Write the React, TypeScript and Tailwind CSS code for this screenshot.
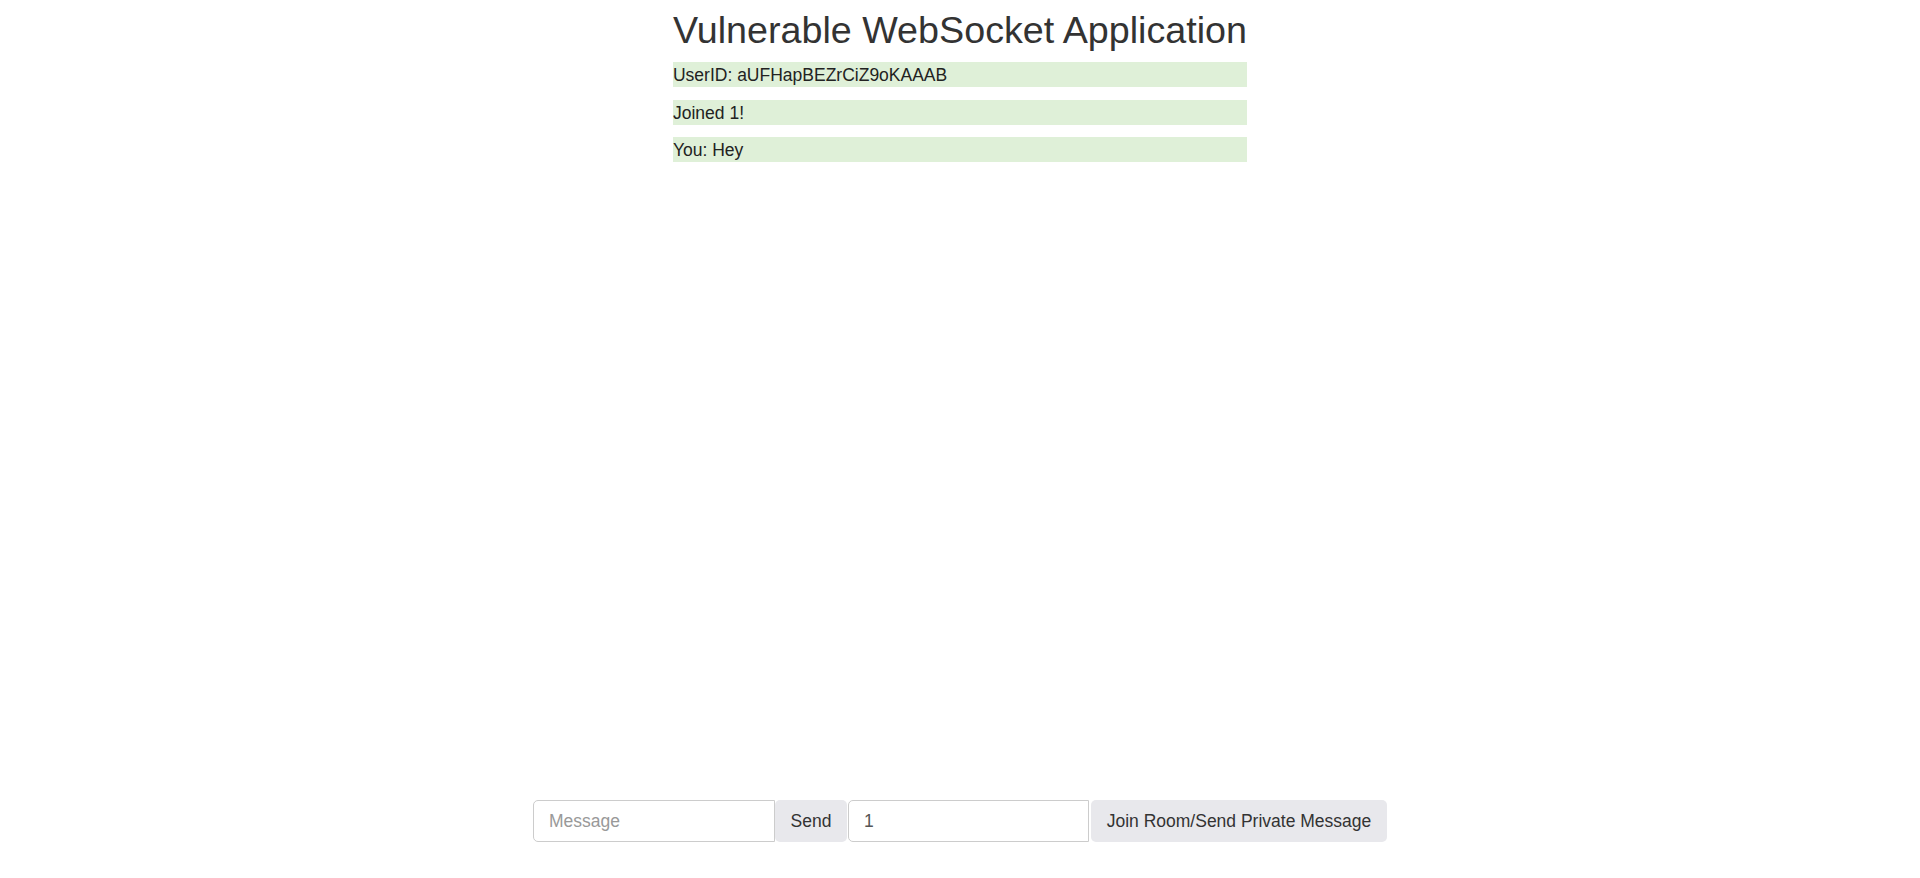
import React from 'react';

const messages = ['UserID: aUFHapBEZrCiZ9oKAAAB', 'Joined 1!', 'You: Hey'];

export default function App() {
  return (
    <div className="h-screen w-full flex flex-col bg-white text-[#333] font-['Liberation_Sans',Arial,sans-serif]">
      <main className="flex-1 flex justify-center">
        <div className="flex flex-col">
          <h1 className="mt-[8px] mb-[10px] text-[37.7px] leading-[44px] font-normal whitespace-nowrap">
            Vulnerable WebSocket Application
          </h1>
          <div className="flex flex-col gap-[12.5px]">
            {messages.map(msg => (
              <div key={msg} className="bg-[#dff0d8] text-[17.5px] leading-[25px] pt-px h-[25px] text-[#222]">
                {msg}
              </div>
            ))}
          </div>
        </div>
      </main>

      <div className="flex justify-center pb-[36px]">
        <div className="flex items-stretch h-[42.5px] text-[17.5px]">
          <input
            type="text"
            placeholder="Message"
            className="w-[242px] border border-[#ccc] rounded-l-[5px] px-[15px] text-[#555] placeholder:text-[#999] outline-none"
          />
          <button className="w-[72px] bg-[#e8e8ec] rounded-[5px] text-[#333]">Send</button>
          <input
            type="text"
            defaultValue="1"
            className="ml-px w-[241px] border border-[#ccc] rounded-l-[5px] px-[15px] text-[#555] outline-none"
          />
          <button className="ml-[2px] w-[296px] bg-[#e8e8ec] rounded-[5px] text-[#333]">
            Join Room/Send Private Message
          </button>
        </div>
      </div>
    </div>
  );
}
